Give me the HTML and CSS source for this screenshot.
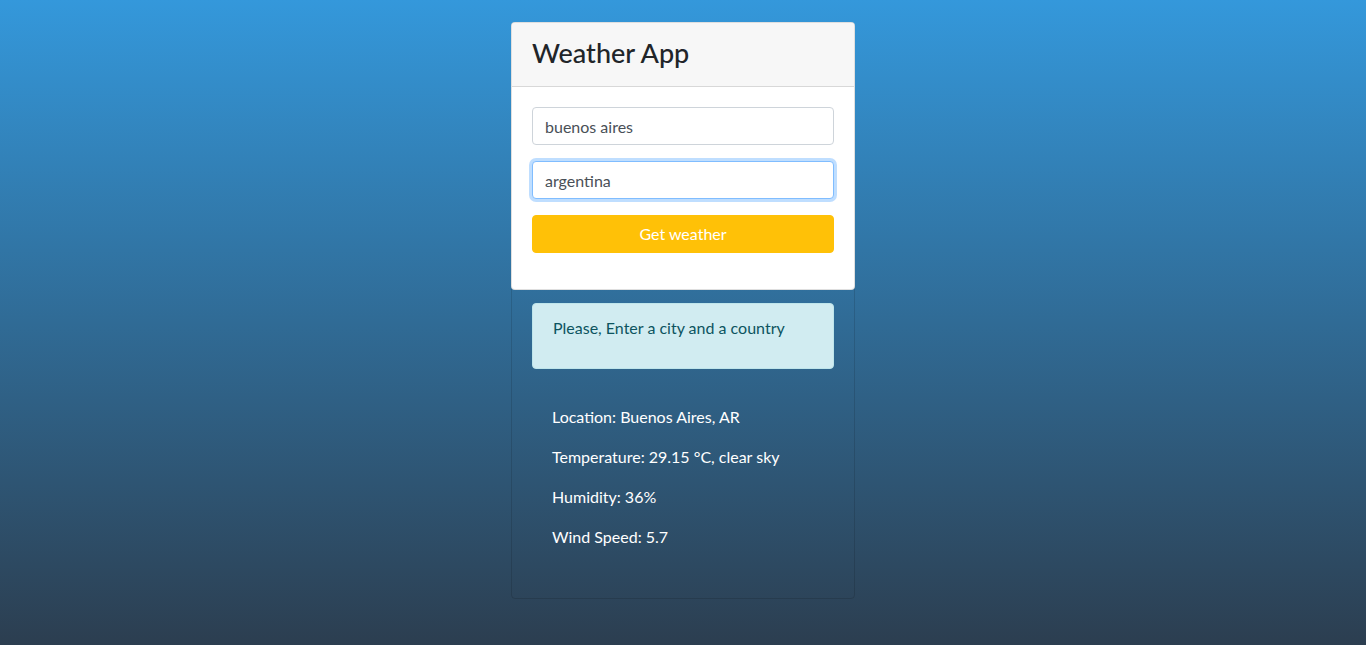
FILE: index.html
```html
<!DOCTYPE html>
<html lang="en">
<head>
<meta charset="utf-8">
<title>Weather App</title>
<link rel="stylesheet" href="styles.css">
</head>
<body>
<main class="wrap">
  <section class="card">
    <div class="card-main">
      <header class="card-header">
        <h3 class="title">Weather App</h3>
      </header>
      <form class="card-body">
        <div class="form-group">
          <input class="form-control" type="text" value="buenos aires">
        </div>
        <div class="form-group">
          <input class="form-control focus" type="text" value="argentina">
        </div>
        <div class="form-group">
          <button class="btn" type="button">Get weather</button>
        </div>
      </form>
    </div>
    <div class="results">
      <div class="alert">
        <p>Please, Enter a city and a country</p>
      </div>
      <div class="info">
        <p>Location: Buenos Aires, AR</p>
        <p>Temperature: 29.15 °C, clear sky</p>
        <p>Humidity: 36%</p>
        <p>Wind Speed: 5.7</p>
      </div>
    </div>
  </section>
</main>
</body>
</html>
```
FILE: styles.css
```css
* { box-sizing: border-box; }
html, body { height: 100%; }
body {
  margin: 0;
  font-family: "Lato", "Noto Sans", sans-serif;
  font-size: 16px;
  line-height: 1.5;
  color: #212529;
  background: linear-gradient(to bottom, #3498db, #2c3e50);
}
.wrap {
  display: flex;
  justify-content: center;
  padding-top: 22px;
}
.card {
  width: 344px;
  border: 1px solid rgba(0, 0, 0, 0.125);
  border-radius: 4px;
}
.card-main {
  background: #fff;
  border: 1px solid rgba(0, 0, 0, 0.125);
  border-radius: 4px;
  margin: -1px -1px 0;
}
.card-header {
  background: #f7f7f7;
  padding: 13px 20px 12px;
  border-bottom: 1px solid rgba(0, 0, 0, 0.125);
  border-radius: 3px 3px 0 0;
}
.title {
  margin: 0 0 4px;
  height: 33.6px;
  font-size: 27px;
  font-weight: 500;
  line-height: 34px;
}
.card-body {
  padding: 20px 20px 20px;
  margin: 0;
}
.form-group { margin-bottom: 16px; }
.form-control {
  display: block;
  width: 100%;
  height: 38px;
  padding: 7px 12px 5px;
  font: inherit;
  color: #495057;
  background: #fff;
  border: 1px solid #ced4da;
  border-radius: 4px;
  outline: none;
}
.form-control.focus {
  border-color: #80bdff;
  box-shadow: 0 0 0 3px rgba(0, 123, 255, 0.25);
}
.btn {
  display: block;
  width: 100%;
  height: 38px;
  padding: 6px 12px;
  font: inherit;
  color: #fff;
  background: #ffc107;
  border: 1px solid #ffc107;
  border-radius: 4px;
}
.results {
  padding: 13px 20px 49px;
}
.alert {
  padding: 12px 20px;
  background: #d1ecf1;
  color: #0c5460;
  border: 1px solid #bee5eb;
  border-radius: 4px;
}
.alert p { margin: 0 0 16px; }
.info {
  padding: 36px 20px 0;
  color: #fff;
}
.info p { margin: 0 0 16px; }
.info p:last-child { margin-bottom: 0; }
```
